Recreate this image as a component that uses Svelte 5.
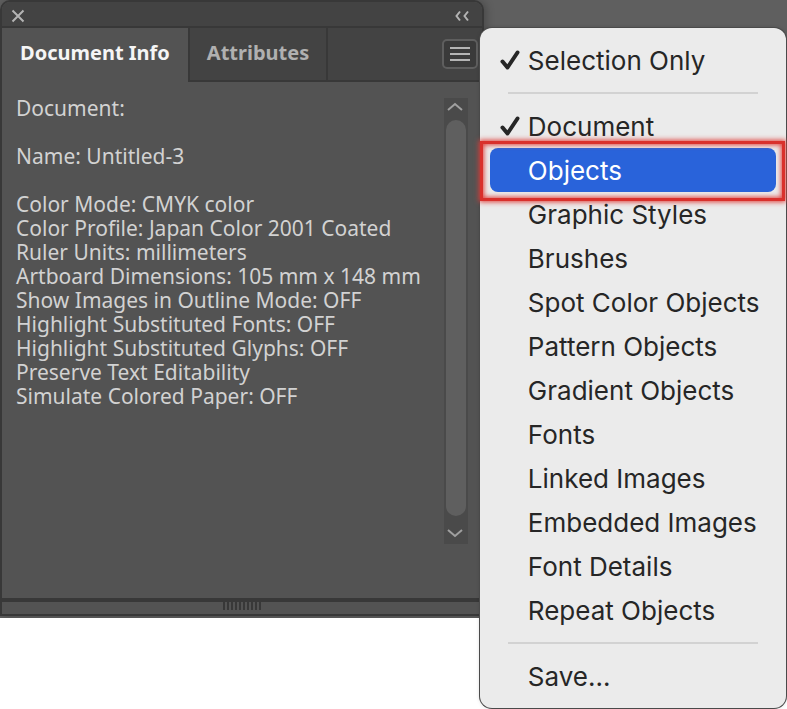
<script lang="ts">
	interface MenuItem {
		label: string;
		checked?: boolean;
	}

	const tabs = ["Document Info", "Attributes"];
	let activeTab = $state("Document Info");

	const info = [
		["Document:"],
		["Name: Untitled-3"],
		[
			"Color Mode: CMYK color",
			"Color Profile: Japan Color 2001 Coated",
			"Ruler Units: millimeters",
			"Artboard Dimensions: 105 mm x 148 mm",
			"Show Images in Outline Mode: OFF",
			"Highlight Substituted Fonts: OFF",
			"Highlight Substituted Glyphs: OFF",
			"Preserve Text Editability",
			"Simulate Colored Paper: OFF",
		],
	];

	// Each group is separated by a line in the menu
	const groups: MenuItem[][] = [
		[{ label: "Selection Only", checked: true }],
		[
			{ label: "Document", checked: true },
			{ label: "Objects" },
			{ label: "Graphic Styles" },
			{ label: "Brushes" },
			{ label: "Spot Color Objects" },
			{ label: "Pattern Objects" },
			{ label: "Gradient Objects" },
			{ label: "Fonts" },
			{ label: "Linked Images" },
			{ label: "Embedded Images" },
			{ label: "Font Details" },
			{ label: "Repeat Objects" },
		],
		[{ label: "Save..." }],
	];
	let current = $state("Objects");
</script>

<main>
	<div class="desktop">
		<section class="panel">
			<header class="titlebar">
				<button class="icon" aria-label="Close">
					<svg width="14" height="14" viewBox="0 0 14 14"><path d="M1.5 1.5l11 11M12.5 1.5l-11 11" /></svg>
				</button>
				<button class="icon" aria-label="Collapse">
					<svg width="16" height="12" viewBox="0 0 16 12"><path d="M6 1.500L2.500 6l3.500 4.500M14 1.500L10.500 6l3.500 4.500" /></svg>
				</button>
			</header>

			<div class="tabs">
				<div class="tablist" role="tablist">
					{#each tabs as tab}
						<button
							class="tab"
							class:active={tab === activeTab}
							role="tab"
							aria-selected={tab === activeTab}
							onclick={() => (activeTab = tab)}>{tab}</button
						>
					{/each}
				</div>
				<div class="tools">
					<button class="menu-button" aria-label="Panel menu">
						<svg width="20" height="14" viewBox="0 0 20 14"><path d="M0 1h20M0 7h20M0 13h20" /></svg>
					</button>
				</div>
			</div>

			<div class="content">
				<div class="info">
					{#each info as lines}
						<p>{lines.join("\n")}</p>
					{/each}
				</div>
				<div class="scrollbar">
					<button class="arrow" aria-label="Scroll up">
						<svg width="16" height="10" viewBox="0 0 16 10"><path d="M1 8l7-6 7 6" /></svg>
					</button>
					<div class="thumb"></div>
					<button class="arrow" aria-label="Scroll down">
						<svg width="16" height="10" viewBox="0 0 16 10"><path d="M1 2l7 6 7-6" /></svg>
					</button>
				</div>
			</div>

			<footer class="resize"><div class="grip"></div></footer>
		</section>
	</div>

	<div class="menu" role="menu">
		{#each groups as group, i}
			{#if i > 0}
				<hr />
			{/if}
			{#each group as item}
				<button
					class="item"
					class:current={item.label === current}
					role="menuitemcheckbox"
					aria-checked={!!item.checked}
					onmouseenter={() => (current = item.label)}
				>
					<span class="check">
						{#if item.checked}
							<svg width="20" height="20" viewBox="0 0 20 20"><path d="M2.500 11.500l5 6L17.500 2.500" /></svg>
						{/if}
					</span>
					{item.label}
				</button>
			{/each}
		{/each}
	</div>
</main>

<style>
	:global(body) {
		margin: 0;
		background: #fff;
	}
	/* the panel and its open menu share one cell, the menu lies on top */
	main {
		display: grid;
		grid-template-columns: minmax(0, 1fr);
		align-items: start;
		font-family: "Noto Sans", sans-serif;
	}
	.desktop,
	.menu {
		grid-area: 1 / 1;
	}
	button {
		margin: 0;
		padding: 0;
		border: none;
		background: none;
		color: inherit;
		font: inherit;
	}
	svg {
		display: block;
		fill: none;
		stroke: #b4b4b4;
		stroke-width: 2;
	}
	.desktop {
		padding-bottom: 2px;
		background: #5f5f5f;
		overflow: hidden;
	}
	.panel {
		box-sizing: border-box;
		width: 61.5%;
		border: 2px solid #383838;
		border-radius: 10px 10px 0 0;
		background: #535353;
		box-shadow: 2px 0 8px rgba(0, 0, 0, 0.25);
		overflow: hidden;
	}
	.titlebar {
		display: flex;
		justify-content: space-between;
		align-items: center;
		height: 24px;
		padding: 0 12px 0 9px;
		border-bottom: 2px solid #383838;
		background: #434343;
	}
	.titlebar svg {
		margin-top: 3px;
	}
	.tabs {
		display: flex;
		height: 54px;
		background: #434343;
	}
	.tablist {
		display: flex;
	}
	.tab {
		padding: 0 17px 4px;
		border-right: 2px solid #383838;
		border-bottom: 2px solid #383838;
		color: #b0b0b0;
		font-size: 20px;
		font-weight: 700;
	}
	.tab.active {
		padding: 0 18px 6px;
		border-bottom: none;
		background: #535353;
		color: #f5f5f5;
	}
	.tools {
		display: flex;
		flex: 1;
		justify-content: flex-end;
		align-items: center;
		padding-right: 4px;
		border-bottom: 2px solid #383838;
	}
	.menu-button {
		display: flex;
		justify-content: center;
		align-items: center;
		width: 36px;
		height: 30px;
		border: 2px solid #5e5e5e;
		border-radius: 5px;
		background: #3a3a3a;
	}
	.content {
		display: flex;
		padding: 14px 14px 54px;
	}
	.info {
		flex: 1;
		color: #d2d2d2;
		font-size: 21px;
		line-height: 24px;
	}
	p {
		margin: 0 0 24px;
		white-space: pre;
	}
	.scrollbar {
		display: flex;
		flex-direction: column;
		width: 24px;
		min-height: 446px;
		margin-top: 2px;
		background: #4a4a4a;
	}
	.arrow {
		display: flex;
		justify-content: center;
		align-items: center;
		height: 22px;
		padding: 0 2px 4px 0;
	}
	.arrow:last-child {
		height: 28px;
		padding: 6px 2px 0 0;
	}
	.arrow svg {
		stroke: #a0a0a0;
	}
	.thumb {
		flex: 1;
		margin: 0 2px;
		border-radius: 10px;
		background: #5f5f5f;
	}
	.resize {
		display: flex;
		justify-content: center;
		height: 12px;
		border-top: 4px solid #383838;
	}
	.grip {
		width: 38px;
		height: 8px;
		background: repeating-linear-gradient(90deg, #383838 0 2px, transparent 2px 4px);
	}
	.menu {
		justify-self: end;
		box-sizing: border-box;
		width: 38.9%;
		margin: 28px 1px 1px 0;
		padding: 10px;
		border-radius: 12px;
		background: #ebebeb;
		box-shadow:
			0 0 0 1px #4a4a4a,
			0 0 4px rgba(0, 0, 0, 0.2);
		color: #262626;
		font-family: Inter, sans-serif;
		font-size: 26px;
	}
	.item {
		position: relative;
		display: flex;
		align-items: center;
		width: 100%;
		height: 44px;
		padding-left: 10px;
		border-radius: 8px;
		white-space: nowrap;
	}
	.check {
		width: 28px;
	}
	.check svg {
		stroke: #262626;
		stroke-width: 4;
		stroke-linecap: round;
		stroke-linejoin: round;
	}
	.item.current {
		background: #2963da;
		color: #fff;
	}
	/* red glow around the highlighted row */
	.item.current::after {
		content: "";
		position: absolute;
		inset: -7px -9px -9px -10px;
		border: 3px solid #d9302c;
		box-shadow:
			0 0 5px 1px #e0403c,
			inset 0 0 5px 1px #e0403c;
	}
	hr {
		height: 2px;
		margin: 10px 18px;
		border: none;
		background: #d2d2d2;
	}
</style>
